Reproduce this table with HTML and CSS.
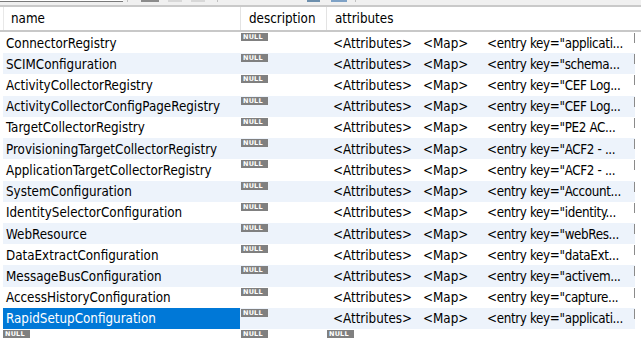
FILE: index.html
```html
<!DOCTYPE html>
<html>
<head>
<meta charset="utf-8">
<link rel="stylesheet" href="styles.css">
</head>
<body>
<div class="toolbar">
  <div class="tb-input"></div>
  <div class="tb-sep"></div>
  <div class="tb-btn dark"></div>
  <div class="tb-btn faint"></div>
  <div class="tb-btn faint"></div>
  <div class="tb-sep s2"></div>
  <div class="tb-icon blue1"></div>
  <div class="tb-icon blue2"></div>
  <div class="tb-sep s3"></div>
</div>
<div class="grid">
  <div class="head">
    <div class="hc c1">name</div>
    <div class="hc c2">description</div>
    <div class="hc c3">attributes</div>
  </div>
  <div class="rows" id="rows"></div>
  <div class="row last">
    <div class="cell c1"><span class="null">NULL</span></div>
    <div class="cell c2"><span class="null">NULL</span></div>
    <div class="cell c3"><span class="null">NULL</span></div>
  </div>
</div>
<script>
const data = [
  ["ConnectorRegistry","applicati..."],
  ["SCIMConfiguration","schema..."],
  ["ActivityCollectorRegistry","CEF Log..."],
  ["ActivityCollectorConfigPageRegistry","CEF Log..."],
  ["TargetCollectorRegistry","PE2 AC..."],
  ["ProvisioningTargetCollectorRegistry","ACF2 - ..."],
  ["ApplicationTargetCollectorRegistry","ACF2 - ..."],
  ["SystemConfiguration","Account..."],
  ["IdentitySelectorConfiguration","identity..."],
  ["WebResource","webRes..."],
  ["DataExtractConfiguration","dataExt..."],
  ["MessageBusConfiguration","activem..."],
  ["AccessHistoryConfiguration","capture..."],
  ["RapidSetupConfiguration","applicati..."]
];
const rows = document.getElementById('rows');
data.forEach((d, i) => {
  const r = document.createElement('div');
  r.className = 'row' + (i % 2 ? ' alt' : '') + (i === data.length - 1 ? ' sel' : '');
  r.innerHTML =
    '<div class="cell c1"><span class="txt"></span></div>' +
    '<div class="cell c2"><span class="null">NULL</span></div>' +
    '<div class="cell c3"><span class="seg a">&lt;Attributes&gt;</span><span class="seg m">&lt;Map&gt;</span><span class="seg e"></span></div>';
  r.querySelector('.txt').textContent = d[0];
  r.querySelector('.e').textContent = '<entry key="' + d[1];
  rows.appendChild(r);
});
</script>
</body>
</html>
```
FILE: styles.css
```css
html, body {
  margin: 0;
  padding: 0;
  background: #ffffff;
  width: 641px;
  height: 359px;
  overflow: hidden;
  font-family: "DejaVu Sans Condensed", "DejaVu Sans", sans-serif;
  font-size: 13.3px;
  color: #000;
}
.toolbar {
  height: 5px;
  background: #f0f0f0;
  border-bottom: 2px solid #c9c9c9;
  display: flex;
  align-items: flex-start;
  overflow: hidden;
}
.tb-input {
  width: 123px;
  height: 1px;
  border-bottom: 1px solid #7a7a7a;
  background: #fff;
}
.tb-sep {
  width: 1px;
  height: 2px;
  background: #c0c0c0;
  margin-left: 4px;
}
.tb-btn { height: 2px; }
.tb-btn.dark { width: 18px; background: #8c8c8c; margin-left: 13px; }
.tb-btn.faint { width: 14px; background: #d8d8d8; margin-left: 9px; }
.tb-sep.s2 { margin-left: 12px; }
.tb-icon { height: 2px; }
.tb-icon.blue1 { width: 13px; background: #6d8fad; margin-left: 89px; }
.tb-icon.blue2 { width: 16px; background: #7fa2c6; margin-left: 11px; }
.tb-sep.s3 { margin-left: 8px; }

.grid {
  padding-left: 3px;
}
.head {
  display: flex;
  height: 23px;
  border-bottom: 2px solid #c8c8c8;
  margin-left: -3px;
  padding-left: 3px;
  background: #fff;
}
.hc {
  display: flex;
  align-items: center;
  padding-left: 8px;
  box-sizing: border-box;
  border-left: 1px solid #e3e3e3;
}
.hc.c1 { border-left: 1px solid #e8e8e8; padding-left: 7px; }
.c1 { width: 237px; flex: none; }
.c2 { width: 86px; flex: none; }
.c3 { width: 309px; flex: none; }
.rows { display: flex; flex-direction: column; }
.row {
  display: flex;
  height: 21.23px;
}
.row.alt .cell { background: #edf3fb; }
.cell {
  box-sizing: border-box;
  overflow: hidden;
  white-space: nowrap;
  display: flex;
  align-items: center;
}
.cell.c1 { padding-left: 3px; padding-top: 1px; }
.cell.c2 { align-items: flex-start; padding-left: 1px; padding-top: 1px; }
.cell.c3 { padding-left: 7px; padding-top: 1px; position: relative; }
.row:not(.last) .cell.c3::after {
  content: "";
  position: absolute;
  right: 0;
  top: 1px;
  width: 1px;
  height: 10px;
  background: #8a8a8a;
}
.row.sel .cell.c1 { background: #0078d7; color: #fff; }
.null {
  display: inline-block;
  background: #808080;
  color: #fff;
  font-family: "DejaVu Sans", sans-serif;
  font-weight: bold;
  font-size: 6.5px;
  line-height: 8px;
  height: 8px;
  width: 27px;
  box-sizing: border-box;
  padding-left: 2px;
  letter-spacing: 0.2px;
}
.seg { display: inline-block; }
.seg.a { width: 90px; }
.seg.m { width: 64px; }
.seg.e { width: 146px; letter-spacing: -0.35px; }
.row.last { height: 10px; }
.row.last .cell { align-items: flex-start; padding-top: 1px; }
.row.last .cell.c1 { padding-left: 0; }
.row.last .cell.c3 { padding-left: 1px; }
```
